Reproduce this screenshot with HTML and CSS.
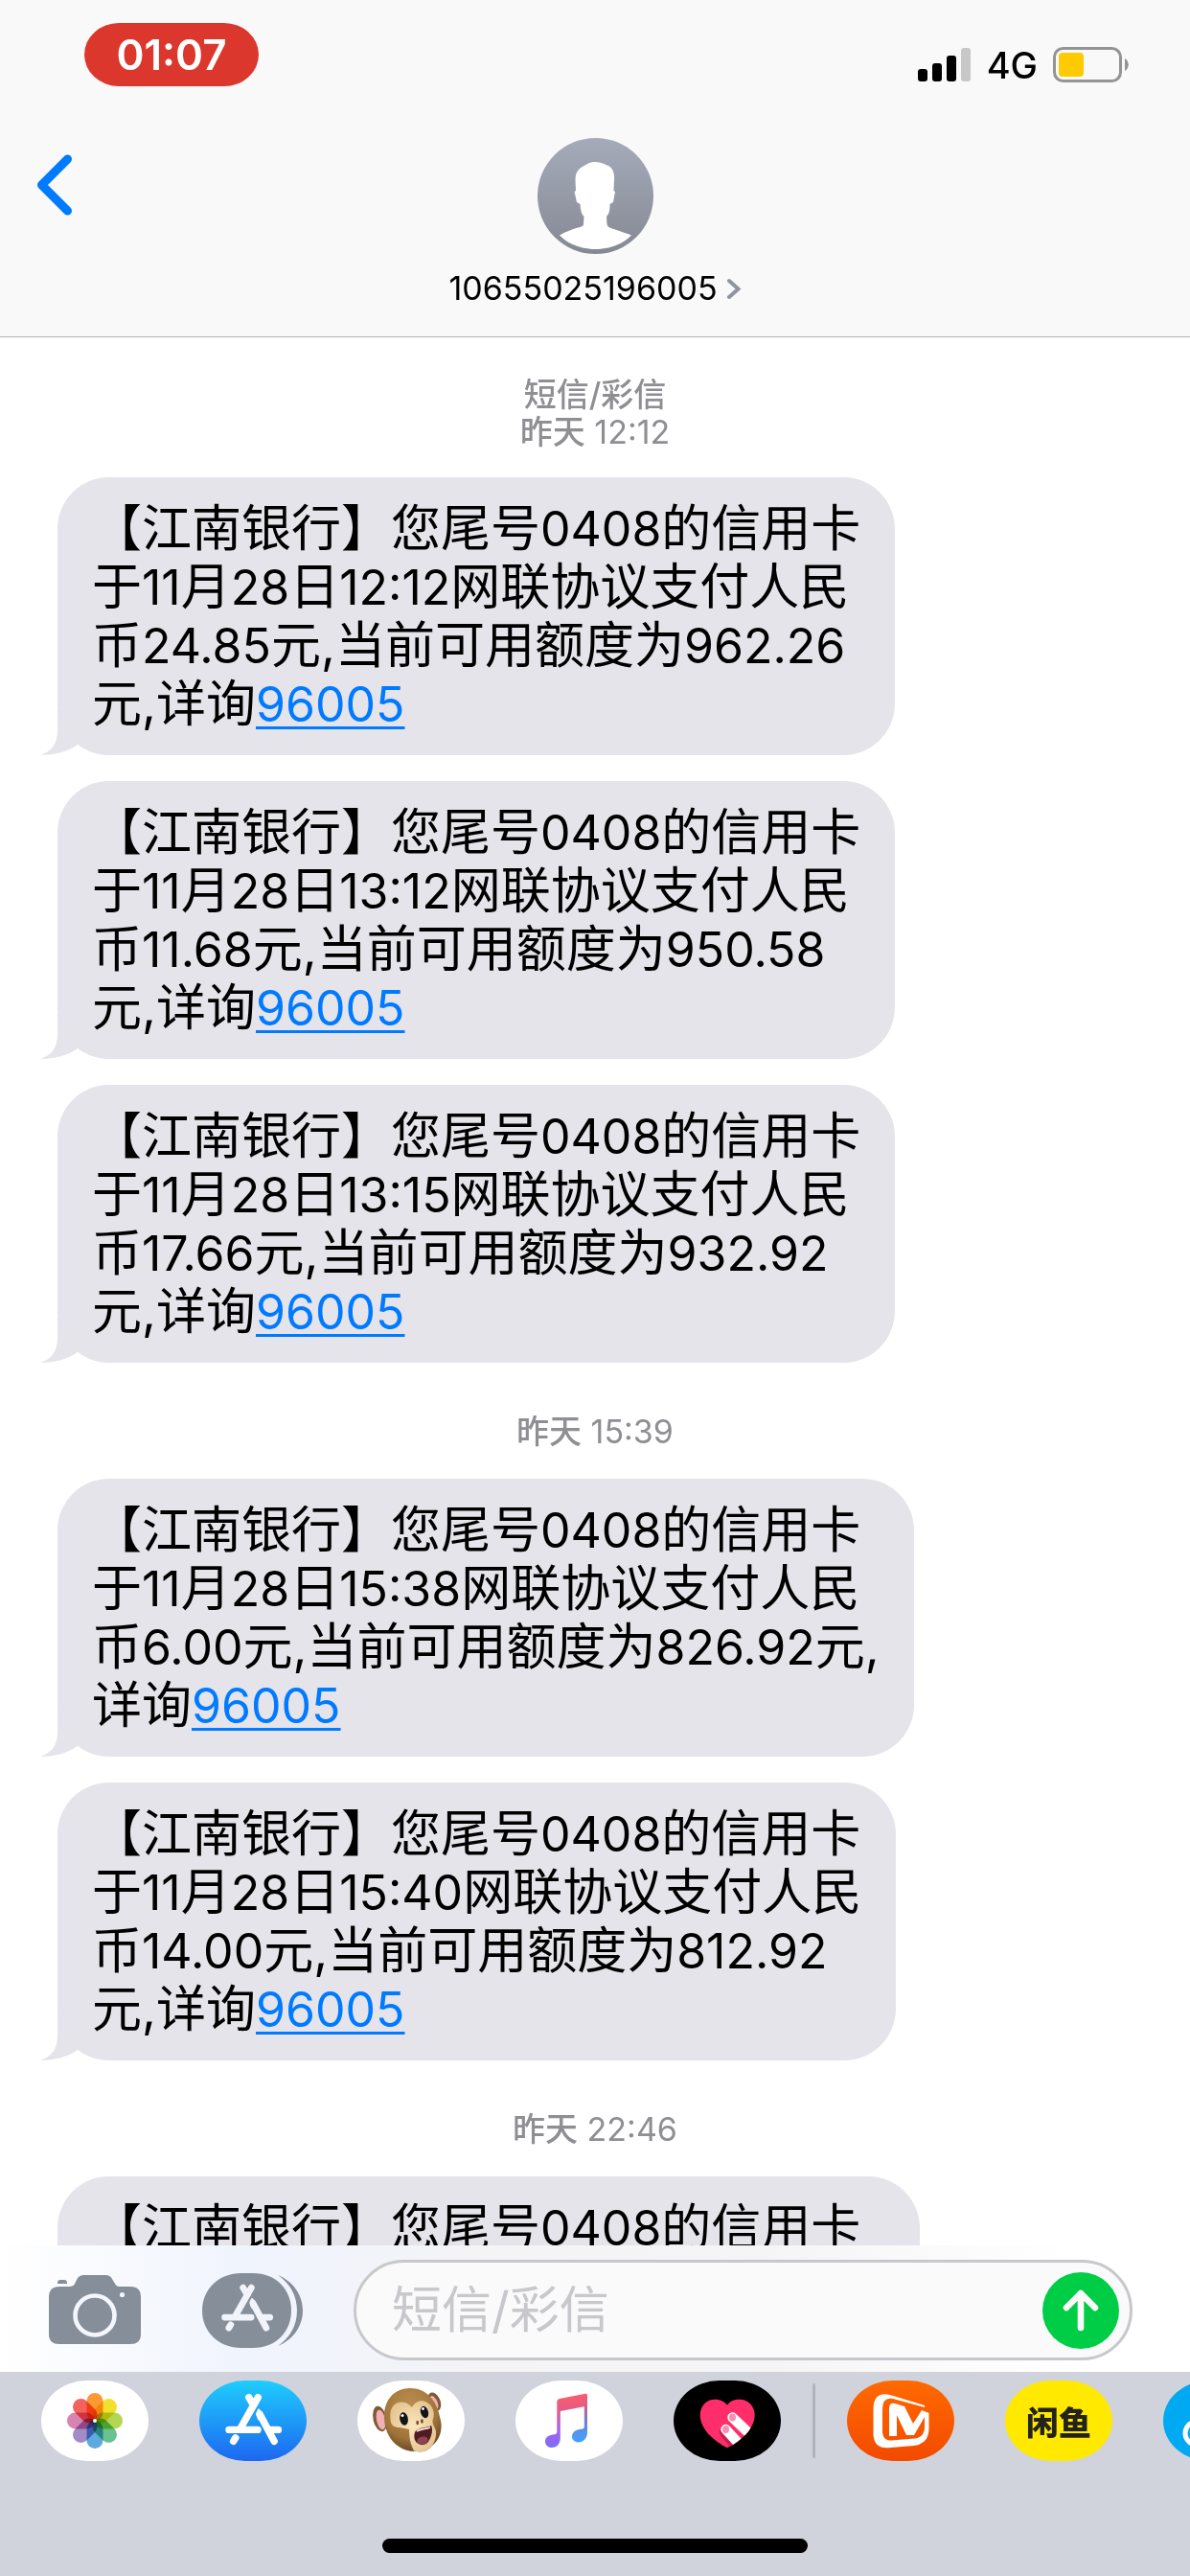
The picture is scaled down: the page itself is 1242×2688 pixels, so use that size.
FILE: index.html
```html
<!DOCTYPE html>
<html lang="zh-CN">
<head>
<meta charset="utf-8">
<meta name="viewport" content="width=device-width, initial-scale=1">
<title>10655025196005</title>
<link rel="stylesheet" href="styles.css">
</head>
<body>
<svg class="defs" width="0" height="0" aria-hidden="true">
  <symbol id="tail" viewBox="0 0 60 48">
    <path d="M18 0V22C18 36 12 44 0 48C16 48 29 44 39 37L60 0Z"/>
  </symbol>
  <symbol id="store" viewBox="0 0 112 84">
    <g fill="none" stroke="currentColor" stroke-width="7.4" stroke-linecap="round">
      <path d="M61.3 17.6L43.5 49"/>
      <path d="M51.8 17.6L56.5 25.5"/>
      <path d="M63 35L78.2 63.4"/>
      <path d="M31 51.4H61"/>
      <path d="M74 51.4H82.4"/>
      <path d="M37.8 59.8L35.6 63.4"/>
    </g>
    <path fill="currentColor" d="M61.4 29.5C58.4 34 59.4 37.6 61.6 41.4L68 37.4L62.6 29.5Z"/>
  </symbol>
</svg>
<div class="app">
  <header class="header">
    <div class="status">
      <time class="clock">01:07</time>
      <div class="indicators">
        <svg class="signal" width="56" height="36" viewBox="0 0 56 36" aria-hidden="true">
          <rect x="0" y="22" width="10" height="13" rx="3"/>
          <rect x="15" y="16" width="10" height="19" rx="3"/>
          <rect x="30" y="8" width="10" height="27" rx="3"/>
          <rect x="45" y="0" width="10" height="35" rx="3" fill="#c8c8c8"/>
        </svg>
        <span class="network">4G</span>
        <svg width="79" height="38" viewBox="0 0 79 38" aria-hidden="true">
          <rect x="1.5" y="1.5" width="69" height="34" rx="9" fill="none" stroke="#949494" stroke-width="3"/>
          <rect x="6" y="6" width="26" height="25" rx="4" fill="#fecb00"/>
          <path d="M75 12C80 15 80 22 75 25Z" fill="#949494"/>
        </svg>
      </div>
    </div>
    <nav class="nav">
      <button class="back" type="button" aria-label="返回">
        <svg width="38" height="64" viewBox="0 0 38 64" fill="none" stroke="#007aff" stroke-width="9" stroke-linecap="round" stroke-linejoin="round"><path d="M32.500 5L5.500 32L32.500 59"/></svg>
      </button>
      <button class="contact" type="button">
        <svg width="121" height="121" viewBox="0 0 121 121" aria-hidden="true">
          <defs><linearGradient id="av" x1="0" y1="0" x2="0" y2="1"><stop offset="0" stop-color="#a5abba"/><stop offset="1" stop-color="#858993"/></linearGradient></defs>
          <circle cx="60.500" cy="60.500" r="60.500" fill="url(#av)"/>
          <path fill="#fff" d="M60 25C67 25 71 28 74 29C79 32 80.500 37 80 44L79.500 55L81 56L79 67L75.500 69C75.500 75 75 79 72 82L72.500 90C73 94 78 94 84 96.500C90 98.500 94 100 98 101.500C90 110 76 116 60.500 116C45 116 31 110 23 101.500C27 99 31 97.500 36 95.500C42 93 48 93 48 90L48.500 82C45.500 79 45 75 44.500 69L41 67L38.500 56L40 55L39.500 44C39.500 37 42 33 46 30.500C51 27.500 54 25 60 25Z"/>
        </svg>
        <span class="contact-name">10655025196005
          <svg width="16" height="23" viewBox="0 0 16 23" fill="none" stroke="#8e959f" stroke-width="4" stroke-linecap="round" aria-hidden="true"><path d="M3 3L12.500 11.500L3 20"/></svg>
        </span>
      </button>
    </nav>
  </header>

  <main class="thread">
    <p class="stamp"><b>短信/彩信</b><br><b>昨天</b> 12:12</p>
    <div class="group">
      <p class="bubble">【江南银行】您尾号<span class="num">0408</span>的信用卡<br>于<span class="num">11</span>月<span class="num">28</span>日<span class="num">12:12</span>网联协议支付人民<br>币<span class="num">24.85</span>元,当前可用额度为<span class="num">962.26</span><br>元,详询<a class="num" href="tel:96005">96005</a><svg class="tail" aria-hidden="true"><use href="#tail"/></svg></p>
      <p class="bubble">【江南银行】您尾号<span class="num">0408</span>的信用卡<br>于<span class="num">11</span>月<span class="num">28</span>日<span class="num">13:12</span>网联协议支付人民<br>币<span class="num">11.68</span>元,当前可用额度为<span class="num">950.58</span><br>元,详询<a class="num" href="tel:96005">96005</a><svg class="tail" aria-hidden="true"><use href="#tail"/></svg></p>
      <p class="bubble">【江南银行】您尾号<span class="num">0408</span>的信用卡<br>于<span class="num">11</span>月<span class="num">28</span>日<span class="num">13:15</span>网联协议支付人民<br>币<span class="num">17.66</span>元,当前可用额度为<span class="num">932.92</span><br>元,详询<a class="num" href="tel:96005">96005</a><svg class="tail" aria-hidden="true"><use href="#tail"/></svg></p>
    </div>
    <p class="stamp"><b>昨天</b> 15:39</p>
    <div class="group">
      <p class="bubble">【江南银行】您尾号<span class="num">0408</span>的信用卡<br>于<span class="num">11</span>月<span class="num">28</span>日<span class="num">15:38</span>网联协议支付人民<br>币<span class="num">6.00</span>元,当前可用额度为<span class="num">826.92</span>元,<br>详询<a class="num" href="tel:96005">96005</a><svg class="tail" aria-hidden="true"><use href="#tail"/></svg></p>
      <p class="bubble">【江南银行】您尾号<span class="num">0408</span>的信用卡<br>于<span class="num">11</span>月<span class="num">28</span>日<span class="num">15:40</span>网联协议支付人民<br>币<span class="num">14.00</span>元,当前可用额度为<span class="num">812.92</span><br>元,详询<a class="num" href="tel:96005">96005</a><svg class="tail" aria-hidden="true"><use href="#tail"/></svg></p>
    </div>
    <p class="stamp"><b>昨天</b> 22:46</p>
    <div class="group">
      <p class="bubble bubble-wide">【江南银行】您尾号<span class="num">0408</span>的信用卡</p>
    </div>
  </main>

  <form class="composer">
    <button type="button" class="tool" aria-label="相机">
      <svg width="96" height="73" viewBox="0 0 96 73" aria-hidden="true">
        <path fill="#868e99" d="M9 9V8Q9 5 12 5H16Q19 5 19 8V9ZM0 23Q0 12 11 12H20C25 12 26 11 27 9L29 5Q31 0 37 0H59Q64 0 66 4L69 9C71 12 72 12 76 12H85Q96 12 96 23V62Q96 72 85 72H11Q0 72 0 62Z"/>
        <circle cx="48" cy="42" r="20.500" fill="none" stroke="#f3f6fd" stroke-width="4.600"/>
        <circle cx="76.500" cy="20.500" r="2.600" fill="#f3f6fd"/>
      </svg>
    </button>
    <button type="button" class="tool tool-apps" aria-label="应用">
      <svg width="105" height="78" viewBox="0 0 105 78" aria-hidden="true">
        <path fill="#868e99" d="M0 39C0 17 17 0 41 0H53C77 0 93 17 93 39S77 78 53 78H41C17 78 0 61 0 39Z"/>
        <path fill="#868e99" d="M79 2C94 8 105 22 105 39S94 70 79 76C91 68 99 55 99 39S91 10 79 2Z"/>
        <use href="#store" x="-5" y="-1" width="103" height="77" color="#f1f4fa"/>
      </svg>
    </button>
    <div class="field">
      <input class="field-input" type="text" placeholder="短信/彩信" aria-label="短信/彩信">
      <button class="send" type="submit" aria-label="发送">
        <svg width="80" height="80" viewBox="0 0 80 80" fill="none" stroke="#fafafa" stroke-width="6.600" stroke-linecap="round" stroke-linejoin="round" aria-hidden="true"><path d="M40 22V58M25 37L40 22L55 37"/></svg>
      </button>
    </div>
  </form>

  <footer class="dock">
    <div class="apps">
      <button type="button" class="app-icon" aria-label="照片">
        <svg viewBox="0 0 112 84" aria-hidden="true">
          <g class="petals">
            <rect x="47.500" y="13" width="17" height="29" rx="8.500" fill="#fb9a33"/>
            <rect x="47.500" y="13" width="17" height="29" rx="8.500" fill="#f3e02c" transform="rotate(45 56 42)"/>
            <rect x="47.500" y="13" width="17" height="29" rx="8.500" fill="#b5d652" transform="rotate(90 56 42)"/>
            <rect x="47.500" y="13" width="17" height="29" rx="8.500" fill="#6ac290" transform="rotate(135 56 42)"/>
            <rect x="47.500" y="13" width="17" height="29" rx="8.500" fill="#5eaadf" transform="rotate(180 56 42)"/>
            <rect x="47.500" y="13" width="17" height="29" rx="8.500" fill="#a38cc6" transform="rotate(225 56 42)"/>
            <rect x="47.500" y="13" width="17" height="29" rx="8.500" fill="#d884b2" transform="rotate(270 56 42)"/>
            <rect x="47.500" y="13" width="17" height="29" rx="8.500" fill="#f3625c" transform="rotate(315 56 42)"/>
          </g>
          <circle cx="56" cy="42" r="2" fill="#fff"/>
        </svg>
      </button>
      <button type="button" class="app-icon app-store" aria-label="App Store">
        <svg viewBox="0 0 112 84" aria-hidden="true"><use href="#store" width="112" height="84"/></svg>
      </button>
      <button type="button" class="app-icon" aria-label="拟我表情">
        <svg viewBox="0 0 112 84" aria-hidden="true">
          <defs>
            <radialGradient id="fur" cx=".45" cy=".3" r=".7"><stop offset="0" stop-color="#bd9050"/><stop offset=".7" stop-color="#a0743a"/><stop offset="1" stop-color="#6d4923"/></radialGradient>
            <radialGradient id="skin" cx=".5" cy=".5" r=".6"><stop offset="0" stop-color="#fbe7bd"/><stop offset="1" stop-color="#e3c28e"/></radialGradient>
          </defs>
          <ellipse cx="23.500" cy="40" rx="7" ry="13.500" fill="#7d5b35" transform="rotate(-12 23.500 40)"/>
          <ellipse cx="24.500" cy="41" rx="4.500" ry="10.500" fill="#f3b0b4" transform="rotate(-12 24.500 41)"/>
          <ellipse cx="80.500" cy="22" rx="6" ry="10" fill="#7d5b35" transform="rotate(-24 80.500 22)"/>
          <ellipse cx="80" cy="23" rx="3.500" ry="7.500" fill="#f3b0b4" transform="rotate(-24 80 23)"/>
          <path fill="url(#fur)" d="M28 40C27 20 39 8 55 8C72 8 83 21 86 38C90 50 86 62 78 68C73 74 68 75 62 74C43 75 29 60 28 40Z"/>
          <path fill="url(#skin)" d="M35 44C33 34 35 25 43 23C49 21 54 25 57 28C60 22 67 19 73 23C79 27 81 34 79 40C77 45 81 48 82 53C83 64 76 74 66 74.500L59 73.500C55 66 54 59 54 51L44 49C39 49 36 47 35 44Z"/>
          <ellipse cx="48.500" cy="40" rx="4.300" ry="6.800" fill="#11151a" transform="rotate(-10 48.500 40)"/>
          <ellipse cx="70" cy="33" rx="4" ry="6.300" fill="#11151a" transform="rotate(-16 70 33)"/>
          <circle cx="47" cy="36.500" r="1.500" fill="#fff"/><circle cx="68.500" cy="29.500" r="1.400" fill="#fff"/>
          <ellipse cx="62.700" cy="44" rx="1.400" ry="2.200" fill="#7a4b2b"/><ellipse cx="67.400" cy="42.500" rx="1.400" ry="2.200" fill="#7a4b2b"/>
          <path fill="#521a22" d="M60.500 53C64 49 74 49 77 47C79.500 51 77 61 73 65C69 69 62 67 60 62C59 59 59 56 60.500 53Z"/>
          <path fill="#8d4450" d="M62 64C62 58 73 56 74 62C71 68 65 68 62 64Z"/>
          <path fill="none" stroke="#f6eee0" stroke-width="1.800" d="M62 53C66 50.500 72 50.500 76 49"/>
        </svg>
      </button>
      <button type="button" class="app-icon" aria-label="音乐">
        <svg viewBox="0 0 112 84" aria-hidden="true">
          <defs>
            <linearGradient id="mu" x1="0" y1="0" x2="0" y2="1"><stop offset="0" stop-color="#ff5b6b"/><stop offset=".3" stop-color="#e25b86"/><stop offset=".65" stop-color="#a766e6"/><stop offset="1" stop-color="#7a6bff"/></linearGradient>
            <linearGradient id="mr" x1="0" y1="0" x2="0" y2="1"><stop offset="0" stop-color="#ff5b66"/><stop offset=".3" stop-color="#c0649c"/><stop offset=".6" stop-color="#6a84d8"/><stop offset="1" stop-color="#40a4ff"/></linearGradient>
          </defs>
          <path fill="url(#mu)" d="M43.300 22Q43.300 19.500 46 19L73 13.800V27L46.800 32V60C46.800 67 42 70 38 70C34 70 31 67.500 31 63.500C31 59 35 57 39 56.500C42 56 43.300 56 43.300 53Z"/>
          <path fill="url(#mr)" d="M71.800 14L73.500 13.700Q75 13.700 75 15.500V54C75 61 70 64.500 66 64.500C62 64.500 59 62 59 58.500C59 54 63 51.500 67 51C70.500 50.500 71.800 50.500 71.800 47Z"/>
        </svg>
      </button>
      <button type="button" class="app-icon app-touch" aria-label="Digital Touch">
        <svg viewBox="0 0 112 84" aria-hidden="true">
          <clipPath id="heart"><path d="M56 25.500C60 20 65 19.700 69 19.700C78 19.700 84.700 27 84.700 36C84.700 52 67 65 56 70.300C45 65 27.700 52 27.700 36C27.700 27 34 19.700 43 19.700C48 19.700 53 21.500 56 25.500Z"/></clipPath>
          <g clip-path="url(#heart)">
            <rect width="112" height="84" fill="#ff2d69"/>
            <g stroke-linecap="round" stroke-width="10.500">
              <path d="M53 54L68 72" stroke="#c91f50"/><path d="M61.500 38.500L86 62" stroke="#fff"/><path d="M54.500 51L72 70" stroke="#fff"/>
            </g>
            <ellipse cx="61.500" cy="38.500" rx="3.500" ry="3.900" fill="#f78fb2"/>
            <ellipse cx="54.500" cy="51" rx="3.500" ry="3.900" fill="#f78fb2"/>
          </g>
        </svg>
      </button>
      <span class="divider"></span>
      <button type="button" class="app-icon app-mango" aria-label="芒果TV">
        <svg viewBox="0 0 112 84" aria-hidden="true"><path fill="#fff" d="M81 26L45 15Q27.500 11 27.500 30V55Q27.500 71 43 70.300L70 68Q85.500 66 85.500 50V34L78 31L69 45L60 27L50 24Q44 23 44 29V58H52V36L62 57H70L81 38V50Q80 59 71 60.500L46 62.500Q38 63 37 54V30Q37 17 48 19L81 28Z"/></svg>
      </button>
      <button type="button" class="app-icon app-fish">闲鱼</button>
      <button type="button" class="app-icon app-cloud" aria-label="网盘">
        <svg viewBox="0 0 112 84" aria-hidden="true"><g fill="none" stroke="#fff" stroke-width="5"><circle cx="35" cy="55" r="12"/><circle cx="77" cy="55" r="12"/><circle cx="56" cy="34" r="14"/></g></svg>
      </button>
    </div>
    <div class="home-bar"></div>
  </footer>
</div>
</body>
</html>
```
FILE: styles.css
```css
* { box-sizing: border-box; }

body {
  margin: 0;
  background: #fff;
  color: #000;
  font-family: Inter, "Noto Sans CJK SC", sans-serif;
}

button {
  padding: 0;
  border: 0;
  background: none;
  color: inherit;
  font: inherit;
}

svg { display: block; }

.defs { position: absolute; }

.app {
  display: flex;
  flex-direction: column;
  height: 100vh;
  overflow: hidden;
}

/* Status bar and contact */

.header {
  flex: none;
  padding-bottom: 30px;
  border-bottom: 1px solid #b2b2b2;
  background: #f9f9f9;
}

.status {
  display: flex;
  justify-content: space-between;
  align-items: flex-end;
  padding: 24px 64px 0 88px;
}

.clock {
  width: 182px;
  border-radius: 36px / 33px;
  background: #db372d;
  color: #fff;
  font-size: 44px;
  font-weight: 600;
  line-height: 66px;
  text-align: center;
}

.indicators {
  display: flex;
  align-items: center;
  gap: 16px;
  padding-bottom: 3px;
}

.network {
  font-size: 38px;
  font-weight: 500;
  line-height: 38px;
}

.nav {
  display: grid;
  grid-template-columns: 1fr auto 1fr;
  align-items: start;
}

.back {
  justify-self: start;
  padding: 71px 38px 0;
}

.contact {
  display: flex;
  flex-direction: column;
  align-items: center;
  gap: 16px;
  padding-top: 54px;
}

.contact-name {
  display: flex;
  align-items: center;
  gap: 9px;
  font-size: 34px;
  line-height: 40px;
}

/* Messages */

.thread {
  flex: 1;
  min-height: 0;
  padding: 40px 60px 0;
  overflow: hidden;
}

.stamp {
  margin: 52px 0 30px;
  color: #8e8e93;
  font-size: 34px;
  line-height: 39px;
  text-align: center;
}

.stamp:first-child { margin: 0 0 28px; }

.stamp b { font-weight: 500; }

.group {
  display: flex;
  flex-direction: column;
  align-items: flex-start;
  gap: 27px;
}

.bubble {
  position: relative;
  min-height: 290px;
  margin: 0;
  padding: 23px 36px;
  border-radius: 54px;
  background: #e5e4ea;
  font-size: 52px;
  line-height: 61px;
  white-space: nowrap;
}

.bubble-wide { width: 900px; }

.num {
  font-size: 50px;
  line-height: 50px;
}

.bubble a {
  color: #007aff;
  text-decoration-thickness: 3px;
  text-underline-offset: 5px;
}

.tail {
  position: absolute;
  bottom: 0;
  left: -18px;
  width: 60px;
  height: 48px;
  fill: #e5e4ea;
}

/* Compose bar */

.composer {
  display: flex;
  flex: none;
  align-items: center;
  padding: 15px 60px 12px 51px;
  background: linear-gradient(90deg, #fff, #f0f4fd 20%, #f4f4f7 40%, #f5f5f7 65%, #fff 90%);
}

.tool {
  flex: none;
  margin-right: 64px;
}

.tool-apps { margin-right: 53px; }

.field {
  display: flex;
  flex: 1;
  align-items: center;
  min-width: 0;
  height: 105px;
  padding: 0 11px 0 37px;
  border: 3px solid #c7c7cc;
  border-radius: 53px;
  background: #fafafa;
}

.field-input {
  flex: 1;
  min-width: 0;
  padding: 0;
  border: 0;
  outline: 0;
  background: none;
  font: inherit;
  font-size: 52px;
}

.field-input::placeholder {
  color: #c7c7cc;
  opacity: 1;
}

.send {
  flex: none;
  border-radius: 50%;
  background: #00cd46;
}

/* App drawer */

.dock {
  display: flex;
  flex: none;
  flex-direction: column;
  align-items: center;
  gap: 81px;
  padding: 9px 0 24px;
  background: #d0d3db;
}

.apps {
  display: flex;
  align-items: center;
  align-self: stretch;
  gap: 53px;
  padding-left: 43px;
  overflow: hidden;
}

.app-icon {
  flex: none;
  width: 112px;
  height: 84px;
  overflow: hidden;
  border-radius: 48px / 42px;
  background: #fff;
}

.petals { isolation: isolate; }

.petals rect { mix-blend-mode: multiply; }

.app-store {
  background: linear-gradient(#1fcdfd, #1d67f1);
  color: #fff;
}

.app-touch { background: #000; }

.app-mango { background: linear-gradient(#ff6a00, #f24a00); }

.app-fish {
  background: #ffe900;
  color: #23231a;
  font-size: 34px;
  font-weight: 900;
}

.app-cloud { background: #00aaf2; }

.divider {
  flex: none;
  width: 3px;
  height: 78px;
  margin: 0 -20px;
  border-radius: 2px;
  background: #b0b3ba;
}

.home-bar {
  width: 444px;
  height: 15px;
  border-radius: 8px;
  background: #000;
}
```
